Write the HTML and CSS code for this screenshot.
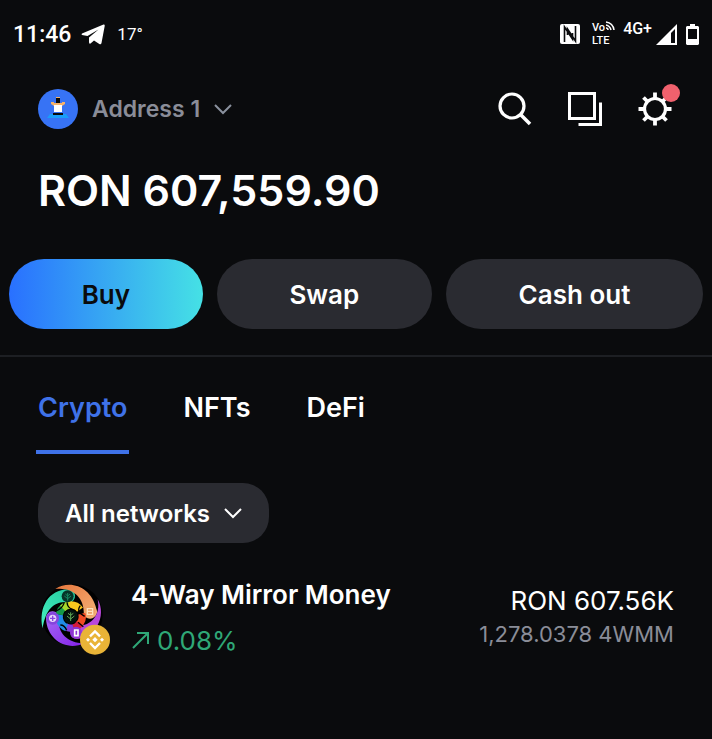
FILE: index.html
```html
<!DOCTYPE html>
<html lang="en">
<head>
    <meta charset="UTF-8">
    <meta name="viewport" content="width=device-width, initial-scale=1.0">
    <title>Wallet</title>
    <link rel="stylesheet" href="styles.css">
</head>
<body>
    <div class="status-bar">
        <div class="status-left">
            <span class="clock">11:46</span>
            <svg width="24" height="21" viewBox="0 0 24 21" fill="#fff"><path d="M1 9.500 22.500.6Q24 0 23.700 2L20.500 19Q20 21 18.300 20L13 16.500 9.500 19.600Q8 20.300 8 18V13.500L17.500 5.500 6.500 12 1 11Q0 10 1 9.500Z"/></svg>
            <span class="temperature">17°</span>
        </div>
        <div class="status-right">
            <svg width="20" height="20" viewBox="0 0 20 20">
                <path fill="#fff" d="M2 0H18Q20 0 20 2V18Q20 20 18 20H2Q0 20 0 18V2Q0 0 2 0Z"/>
                <path fill="none" stroke="#0a0b0d" stroke-width="1.600" d="M4.500 18V3L12.500 15V9M15.500 2V17L7.500 5V11"/>
            </svg>
            <div class="volte">
                <span>Vo<svg width="10" height="10" viewBox="0 0 10 10" fill="none" stroke="#fff" stroke-width="1.500"><path d="M1 1Q8 2 9 9M1 4Q5 5 6 9M1 7Q3 7 3 9"/></svg></span>
                <span>LTE</span>
            </div>
            <span class="network">4G+</span>
            <svg width="21" height="21" viewBox="0 0 21 21"><path fill="#fff" fill-rule="evenodd" d="M21 0V21H0ZM19 5V19H15V9Z"/></svg>
            <svg class="battery" width="13" height="21" viewBox="0 0 13 21"><path fill="#fff" fill-rule="evenodd" d="M4 0H9V2H12L13 3V20L12 21H1L0 20V3L1 2H4ZM2 5V15H11V5Z"/></svg>
        </div>
    </div>

    <header class="top-bar">
        <button class="account">
            <svg width="40" height="40" viewBox="0 0 40 40">
                <circle cx="20" cy="20" r="20" fill="#3773f5"/>
                <path fill="#199dfa" d="M12 25H28L31 29H9Z"/>
                <path fill="#f5b26b" d="M13 13H16V14H24V13H27V15L24 17V19H16V17L13 15Z"/>
                <path fill="#f5b26b" d="M18 8H22V14H18Z"/>
                <path fill="#0a0b0d" d="M18 9H22V14H18ZM15 24H25V26H15Z"/>
                <path fill="#fff" d="M16 16H24V23H16Z"/>
            </svg>
            <span>Address 1</span>
            <svg width="18" height="11" viewBox="0 0 18 11" fill="none" stroke="#8a919e" stroke-width="2"><path d="M1 1 9 9 17 1"/></svg>
        </button>
        <div class="top-actions">
            <button class="icon-button" aria-label="Search">
                <svg width="34" height="34" viewBox="0 0 34 34" fill="none" stroke="#fff"><circle cx="14" cy="14" r="12" stroke-width="3.200"/><path stroke-width="3.600" d="M22.500 22.500 32 32"/></svg>
            </button>
            <button class="icon-button" aria-label="Tabs">
                <svg width="34" height="34" viewBox="0 0 34 34" fill="none" stroke="#fff" stroke-width="3"><path d="M1.500 1.500H26.500V26.500H1.500ZM32.500 10.500V32.500H10.500"/></svg>
            </button>
            <button class="icon-button" aria-label="Settings">
                <svg width="34" height="34" viewBox="0 0 34 34" fill="none" stroke="#fff" stroke-width="3.800"><circle cx="17" cy="17" r="10.500" stroke-width="3.200"/><path d="M17 6V.5M17 28V33.500M6 17H.5M28 17H33.500M9.500 9.500 5.500 5.500M24.500 24.500 28.500 28.500M9.500 24.500 5.500 28.500M24.500 9.500 28.500 5.500"/></svg>
                <span class="badge"></span>
            </button>
        </div>
    </header>

    <h1 class="balance">RON 607,559.90</h1>

    <div class="actions">
        <button class="action buy">Buy</button>
        <button class="action">Swap</button>
        <button class="action">Cash out</button>
    </div>

    <nav class="tabs">
        <a href="#crypto" class="tab active">Crypto</a>
        <a href="#nfts" class="tab">NFTs</a>
        <a href="#defi" class="tab">DeFi</a>
    </nav>

    <main id="crypto" class="assets">
        <button class="filter">
            All networks
            <svg width="18" height="11" viewBox="0 0 18 11" fill="none" stroke="#fff" stroke-width="2"><path d="M1 1 9 9 17 1"/></svg>
        </button>

        <a href="#4wmm" class="asset">
            <svg class="token" width="72" height="72" viewBox="24 24 216 216">
                <defs>
                    <linearGradient id="teal" x1="0" y1="1" x2="1" y2="0"><stop offset="0" stop-color="#45f0c0"/><stop offset="1" stop-color="#22c79c"/></linearGradient>
                    <linearGradient id="orange" x1="0" y1="0" x2="1" y2="1"><stop offset="0" stop-color="#e8773c"/><stop offset="1" stop-color="#f5b37a"/></linearGradient>
                    <linearGradient id="purple" x1="0" y1="0" x2="1" y2="1"><stop offset="0" stop-color="#a56cf5"/><stop offset="1" stop-color="#8420e8"/></linearGradient>
                </defs>
                <circle cx="126" cy="120" r="92" fill="#000"/>
                <path fill="url(#teal)" d="M38 160C24 96 58 44 113 43A20 20 0 0 1 117 83C80 76 48 94 38 160Z"/>
                <path fill="url(#orange)" d="M76 42C123 12 184 38 199 101A20 20 0 0 1 161 119C165 75 133 34 76 42Z"/>
                <path fill="url(#purple)" d="M48 130A20 20 0 0 1 88 128C80 172 112 204 162 205C112 229 50 196 48 130Z"/>
                <path fill="#b848db" d="M203 73C232 124 194 191 141 192A20 20 0 0 1 135 153C184 156 213 120 203 73Z"/>
                <g fill="none" stroke-width="22">
                    <path stroke="#159a48" d="M88 119A35 35 0 0 1 106 94"/>
                    <path stroke="#a5d82c" d="M98 100A35 35 0 0 1 122 90"/>
                    <path stroke="#f9c71e" d="M117 90A35 35 0 0 1 150 104"/>
                    <path stroke="#f04b25" d="M156 116A35 35 0 0 1 144 151"/>
                    <path stroke="#d51b3c" d="M149 146A35 35 0 0 1 129 159"/>
                    <path stroke="#853bdc" d="M130 159A35 35 0 0 1 106 155"/>
                    <path stroke="#218be6" d="M110 158A35 35 0 0 1 88 119"/>
                </g>
                <path fill="none" stroke="#000" stroke-width="4" d="M78 108Q98 100 103 82M111 82Q112 98 128 104M151 92Q142 103 149 114L164 124M144 142 160 155M91 150Q104 150 110 166"/>
                <circle cx="122" cy="125" r="21" fill="#04130e"/>
                <circle cx="113" cy="64" r="18" fill="#063328"/>
                <path fill="none" stroke="#178863" stroke-width="3" d="M113 54V77M103 63 113 71 123 63M106 57 113 63 120 57"/>
                <path fill="none" stroke="#63a957" stroke-width="3" d="M122 112V138M111 123 122 132 133 123M114 115 122 121 130 115"/>
                <circle cx="68" cy="130" r="19" fill="#8545dc"/>
                <circle cx="68" cy="130" r="11" fill="#ead8fc"/>
                <path fill="none" stroke="#8544df" stroke-width="4" d="M68 122V138M60 130H76"/>
                <circle cx="180" cy="109" r="15" fill="#eda164"/>
                <path fill="none" stroke="#fce0bd" stroke-width="4" d="M172 101H188V118H172ZM172 109H188"/>
                <circle cx="138" cy="173" r="18" fill="#8e35d3"/>
                <path fill="none" stroke="#fff" stroke-width="5" d="M134 165H144V182H134Z"/>
                <circle cx="195" cy="194" r="45" fill="#e9b437"/>
                <path fill="none" stroke="#fff" stroke-width="7" d="M180 184 195 169 210 184M180 204 195 219 210 204"/>
                <path fill="#fff" d="M195 186 203 194 195 202 187 194ZM174 188 180 194 174 200 168 194ZM216 188 222 194 216 200 210 194Z"/>
            </svg>
            <div class="asset-info">
                <span class="asset-name">4-Way Mirror Money</span>
                <span class="asset-change">
                    <svg width="18" height="18" viewBox="0 0 18 18" fill="none" stroke="#2fa877" stroke-width="2"><path d="M2 16 17 1M6 1H17V12"/></svg>
                    0.08%
                </span>
            </div>
            <div class="asset-value">
                <span class="asset-fiat">RON 607.56K</span>
                <span class="asset-amount">1,278.0378 4WMM</span>
            </div>
        </a>
    </main>
</body>
</html>
```
FILE: styles.css
```css
* {
    box-sizing: border-box;
}

body {
    margin: 0;
    min-height: 100vh;
    background-color: #0a0b0d;
    color: #fff;
    font-family: Inter, "Liberation Sans", sans-serif;
}

button {
    padding: 0;
    border: none;
    background: none;
    color: inherit;
    font-family: inherit;
    cursor: pointer;
}

a {
    color: inherit;
    text-decoration: none;
}

svg {
    flex: none;
}

.status-bar {
    display: flex;
    justify-content: space-between;
    align-items: center;
    height: 68px;
    padding: 0 13px;
    font-family: Roboto, sans-serif;
}

.status-left {
    display: flex;
    align-items: center;
    gap: 10px;
}

.clock {
    font-size: 23px;
    font-weight: 500;
}

.temperature {
    margin-left: 2px;
    font-size: 17px;
}

.status-right {
    display: flex;
    align-items: center;
}

.volte {
    display: flex;
    flex-direction: column;
    margin: 0 8px 0 12px;
    font-size: 11px;
    font-weight: 500;
    line-height: 13px;
}

.volte span {
    display: flex;
}

.network {
    margin: 0 4px 10px 0;
    font-size: 16px;
    font-weight: 500;
    line-height: 16px;
}

.battery {
    margin-left: 9px;
}

.top-bar {
    display: flex;
    justify-content: space-between;
    align-items: center;
    height: 82px;
    padding: 0 40px 0 38px;
}

.account {
    display: flex;
    align-items: center;
    gap: 14px;
    color: #8a8d98;
    font-size: 23px;
    font-weight: 600;
}

.top-actions {
    display: flex;
    gap: 36px;
}

.icon-button {
    position: relative;
    display: flex;
}

.badge {
    position: absolute;
    top: -8px;
    right: -8px;
    width: 18px;
    height: 18px;
    border-radius: 50%;
    background-color: #f0616d;
}

.balance {
    margin: 0;
    padding: 0 38px;
    font-size: 43px;
    font-weight: 600;
    line-height: 80px;
}

.actions {
    display: flex;
    gap: 14px;
    padding: 29px 9px 26px;
    border-bottom: 2px solid #1d1f23;
}

.action {
    flex: 1 1 auto;
    height: 70px;
    border-radius: 35px;
    background-color: #2a2b31;
    font-size: 26px;
    font-weight: 600;
}

.buy {
    background: linear-gradient(90deg, #2970ff, #45e1e5);
    color: #0a0b0d;
}

.tabs {
    display: flex;
    gap: 52px;
    padding: 0 36px;
}

.tab {
    height: 97px;
    padding: 0 2px;
    border-bottom: 4px solid transparent;
    font-size: 27px;
    font-weight: 600;
    line-height: 102px;
}

.tab.active {
    border-bottom-color: #3f72e8;
    color: #3f72e8;
}

.assets {
    padding: 29px 38px;
}

.filter {
    display: flex;
    align-items: center;
    gap: 14px;
    height: 60px;
    padding: 0 27px;
    border-radius: 26px;
    background-color: #2a2b31;
    font-size: 24px;
    font-weight: 600;
}

.asset {
    display: flex;
    margin-top: 36px;
}

.token {
    margin-top: 4px;
}

.asset-info {
    display: flex;
    flex-direction: column;
    margin-left: 21px;
}

.asset-name {
    font-size: 26px;
    font-weight: 600;
    line-height: 32px;
}

.asset-change {
    display: flex;
    align-items: center;
    gap: 8px;
    margin-top: 14px;
    color: #2fa877;
    font-size: 26px;
    line-height: 32px;
}

.asset-value {
    display: flex;
    flex-direction: column;
    align-items: flex-end;
    margin-top: 6px;
    margin-left: auto;
}

.asset-fiat {
    font-size: 26px;
    line-height: 32px;
}

.asset-amount {
    color: #8a8d98;
    font-size: 22px;
    line-height: 34px;
}
```
